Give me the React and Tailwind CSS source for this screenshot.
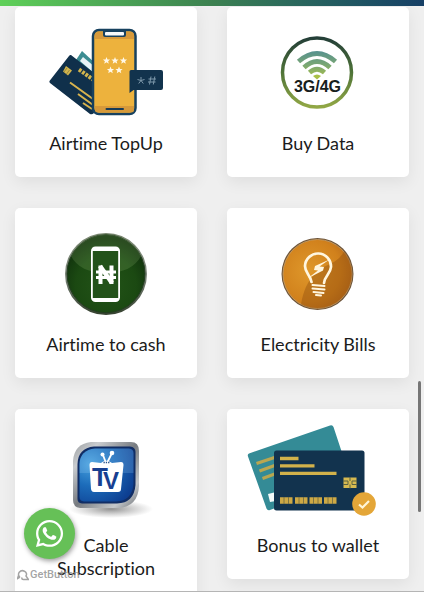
import React from "react";
import { FaWhatsapp } from "react-icons/fa";

const star = "M0 -3.6 L1 -1.1 L3.6 -1 L1.6 .7 L2.3 3.3 L0 1.8 L-2.3 3.3 L-1.6 .7 L-3.6 -1 L-1 -1.1Z";

function TopUpIcon() {
  return (
    <svg viewBox="31 23 150 109" className="h-[109px] w-[150px]" aria-hidden="true">
      <path d="M82 51 L76 60 L96 84 V64Z" fill="#3c8d92" />
      <path d="M83 57 L80 61 L95 74 V67Z" fill="#e9f3f6" />
      <path d="M71 55 Q70 54.500 69 56 L49.500 81 Q49 82 50 83 L90 114 Q92 115 94 113 V73Z" fill="#10304b" />
      <path d="M66 66 l6 4.500 l-4 5 l-5 -4z" fill="#d3b54d" />
      <path d="M67 68 l-3 4 M69.500 70 l-3 4" stroke="#7b743c" strokeWidth=".7" />
      <path d="M79 69.500 L93 79.500" stroke="#d3b54d" strokeWidth="4" strokeDasharray="2.800 1.200" />
      <path d="M70 82.500 L93 99 M78 94 L93 105 M83 103 L92 109" stroke="#d8b34e" strokeWidth="2" />
      <rect x="93" y="30" width="42.500" height="84" rx="6" fill="#edb23d" stroke="#17415f" strokeWidth="2.500" />
      <path d="M95 39 V35 Q95 32 98 32 H131 Q134 32 134 35 V39Z M95 106 H134 V110 Q134 112.500 131 112.500 H98 Q95 112.500 95 110Z" fill="#d6993a" />
      <path d="M103 30 H126 V35 Q126 37 124 37 H105 Q103 37 103 35Z" fill="#17415f" />
      <rect x="105" y="32" width="19" height="3.500" rx="1" fill="#f7fafb" />
      <path d="M106.500 109 H123" stroke="#173b56" strokeWidth="2" strokeLinecap="round" />
      <g fill="#fff8e8">
        <path d={star} transform="translate(106.500 60.500)" />
        <path d={star} transform="translate(115 60.500)" />
        <path d={star} transform="translate(123.500 60.500)" />
        <path d={star} transform="translate(110.500 70)" />
        <path d={star} transform="translate(119 70)" />
      </g>
      <path d="M131 70 H161 Q163 70 163 72 V88 Q163 90 161 90 H133.500 L129.500 93 V71.500 Q129.500 70 131 70Z" fill="#12334d" />
      <path d="M141 77 V80.500 M141 80.500 l-3.500 -1 M141 80.500 l3.500 -1 M141 80.500 l-2.300 3 M141 80.500 l2.300 3 M151 76.500 l-1.500 8 M154.800 76.500 l-1.500 8 M148.500 79 h7.500 M148 82 h7.500" fill="none" stroke="#7d98aa" strokeWidth="1" />
    </svg>
  );
}

function DataIcon() {
  return (
    <svg viewBox="243 23 150 109" className="h-[109px] w-[150px]" aria-hidden="true">
      <defs>
        <linearGradient id="ring" x1="0" y1="0" x2="0" y2="1">
          <stop offset="0" stopColor="#243f38" />
          <stop offset=".5" stopColor="#4f7438" />
          <stop offset="1" stopColor="#91a745" />
        </linearGradient>
        <linearGradient id="wifi" gradientUnits="userSpaceOnUse" x1="0" y1="51" x2="0" y2="79">
          <stop offset="0" stopColor="#56918f" />
          <stop offset=".5" stopColor="#7aa773" />
          <stop offset="1" stopColor="#a9bf45" />
        </linearGradient>
      </defs>
      <circle cx="317" cy="72.500" r="34.500" fill="#fff" stroke="url(#ring)" strokeWidth="3.500" />
      <g fill="none" stroke="url(#wifi)" strokeWidth="4.800">
        <path d="M298.500 61.500 Q317 45.500 335.500 61.500" />
        <path d="M304 67.500 Q317 55.500 330 67.500" />
        <path d="M309.500 72.500 Q317 66 324.500 72.500" />
      </g>
      <path d="M313 76 Q317 73 321 76 L317 79.500Z" fill="#a9bf45" />
      <text x="317.500" y="92" textAnchor="middle" fontFamily="Liberation Sans, sans-serif" fontWeight="700" fontSize="16" fill="#17201c">3G/4G</text>
    </svg>
  );
}

function CashIcon() {
  return (
    <svg viewBox="31 224 150 109" className="h-[109px] w-[150px]" aria-hidden="true">
      <defs>
        <radialGradient id="green" cx=".5" cy=".65" r=".6">
          <stop offset="0" stopColor="#235418" />
          <stop offset=".65" stopColor="#1b4912" />
          <stop offset="1" stopColor="#11330d" />
        </radialGradient>
        <linearGradient id="greenRim" x1="0" y1="0" x2="0" y2="1">
          <stop offset="0" stopColor="#78866f" />
          <stop offset=".5" stopColor="#7b8579" />
          <stop offset="1" stopColor="#35412f" />
        </linearGradient>
      </defs>
      <circle cx="106" cy="274" r="41" fill="url(#greenRim)" />
      <circle cx="106" cy="273.700" r="39" fill="url(#green)" stroke="#233d20" strokeWidth="1" />
      <path d="M71 256 A39 39 0 0 1 141 256 Q132 273 106 273 Q80 273 71 256Z" fill="#b5d78d" fillOpacity=".16" />
      <rect x="91" y="246.500" width="29" height="55.500" rx="4.500" fill="#fff" />
      <rect x="92.800" y="251" width="25.400" height="47" fill="#23521a" />
      <g fill="none" stroke="#fff">
        <path d="M100.500 284 V265.500 M111.500 284 V265.500" strokeWidth="4" />
        <path d="M100 266 L112 283" strokeWidth="4.500" />
        <path d="M96 272 H116 M96 277.500 H116" strokeWidth="3" />
      </g>
    </svg>
  );
}

function BulbIcon() {
  return (
    <svg viewBox="243 224 150 109" className="h-[109px] w-[150px]" aria-hidden="true">
      <defs>
        <radialGradient id="orange" cx=".38" cy=".45" r=".65">
          <stop offset="0" stopColor="#df982b" />
          <stop offset=".7" stopColor="#d1811c" />
          <stop offset="1" stopColor="#b96c1b" />
        </radialGradient>
      </defs>
      <circle cx="317.500" cy="274" r="36" fill="#6e5438" />
      <circle cx="317.500" cy="274" r="34.500" fill="url(#orange)" stroke="#c6a06a" strokeWidth=".8" />
      <path d="M344 251 A35 35 0 0 1 301 304.500 C306 276 319 269 334 262 Q341 258 344 251Z" fill="#8a4a0c" fillOpacity=".38" />
      <g fill="none" stroke="#fff6df" strokeLinecap="round">
        <path d="M311.500 282 C310 274 305 273 305 266 A13 13 0 0 1 331 267 C330.500 274 324.500 276 324 283" strokeWidth="2.700" />
        <path d="M312.500 285 l12 1 M312.500 288.500 l12 1 M313.500 292 l10 1" strokeWidth="2" />
        <path d="M316 295 l5 .4" strokeWidth="2" />
      </g>
      <path d="M329.500 259.500 L315 266 L314 270 L318 270.500 L307.500 278.500 L323 270.500 L324 267 L319.500 266.500Z" fill="#fff6df" />
    </svg>
  );
}

function TvIcon() {
  return (
    <svg viewBox="31 425 150 109" className="h-[109px] w-[150px]" aria-hidden="true">
      <defs>
        <linearGradient id="steel" x1="0" y1="0" x2="1" y2="1">
          <stop offset="0" stopColor="#9a9d9f" />
          <stop offset=".2" stopColor="#c9cccf" />
          <stop offset=".5" stopColor="#777b80" />
          <stop offset=".8" stopColor="#c5c8cb" />
          <stop offset="1" stopColor="#686c71" />
        </linearGradient>
        <radialGradient id="blue" cx=".2" cy=".3" r=".9">
          <stop offset="0" stopColor="#469fdd" />
          <stop offset=".45" stopColor="#1c6cba" />
          <stop offset="1" stopColor="#0d3e91" />
        </radialGradient>
        <radialGradient id="shade">
          <stop offset="0" stopColor="#555" stopOpacity=".65" />
          <stop offset="1" stopColor="#777" stopOpacity="0" />
        </radialGradient>
      </defs>
      <ellipse cx="111" cy="509" rx="42" ry="9" fill="url(#shade)" />
      <path d="M91 442 H131 Q139 442 139 451 V486 Q138 507 118 508 H80 Q73 507 73 500 V461 Q74 444 91 442Z" fill="url(#steel)" />
      <path d="M94 446.500 H130 Q135.500 447 135.500 452 V485 Q134 503 117 503.500 H82 Q77.500 503 77.500 499 V464 Q78 448 94 446.500Z" fill="#102d65" />
      <path d="M95 448.500 H129 Q133.500 449 133.500 453 V484 Q132 501 116 501.500 H84 Q79.500 501 79.500 497 V464 Q80 450 95 448.500Z" fill="url(#blue)" />
      <path d="M79.500 473 V464 Q80 450 95 448.500 H129 Q133.500 449 133.500 453 V473Z" fill="#a9ddff" fillOpacity=".2" />
      <path d="M106 463 L103 455 M107 463 L112 453" stroke="#fff" strokeWidth="1.800" />
      <circle cx="102.500" cy="454.500" r="2" fill="#fff" />
      <circle cx="112" cy="453" r="2.300" fill="#fff" />
      <path d="M101 463 Q106 458.500 112 463 L121 462 Q123.500 462 123.500 465 L121 489 Q121 492 118 492 H94 Q91.500 492 91 489 L89.500 465 Q89.500 462 92 462Z" fill="#fff" />
      <path d="M103.500 462.500 h6" stroke="#234f88" strokeWidth="1.300" strokeDasharray="1.300 1" />
      <g fontFamily="Liberation Sans, sans-serif" fontWeight="700" fill="#173f91">
        <text x="92" y="486" fontSize="26">T</text>
        <text x="103" y="489" fontSize="24">V</text>
      </g>
    </svg>
  );
}

function WalletIcon() {
  return (
    <svg viewBox="243 425 150 109" className="h-[109px] w-[150px]" aria-hidden="true">
      <path d="M249 453.500 L330 425.500 Q332.500 424.500 333.500 427 L351 480 L270 510 Q267.500 511 266.500 508.500 L248 456.500 Q247.200 454.200 249 453.500Z" fill="#348b96" />
      <path d="M256.500 463.500 L276 457 M259.500 471 L276 465 M262.500 478.500 L276 473.500" stroke="#b9a650" strokeWidth="3.200" />
      <path d="M268 494 L276 492 V501 L270 502Z" fill="#f4fafa" />
      <rect x="274" y="450.500" width="90.500" height="60" rx="2.500" fill="#12334e" />
      <path d="M280 458.500 H298.500 M280 465.800 H314.500 M280 473.300 H336.500" stroke="#d2b24b" strokeWidth="3.300" />
      <path d="M280 500.500 H292.500 M295 500.500 H307.500 M309.500 500.500 H322 M324 500.500 H336.500" stroke="#cda945" strokeWidth="6.500" />
      <path d="M284 497 V504 M288.500 497 V504 M299 497 V504 M303.500 497 V504 M313.500 497 V504 M318 497 V504 M328 497 V504 M332.500 497 V504" stroke="#6b6841" strokeWidth=".8" />
      <rect x="343.500" y="477.500" width="13" height="10.500" fill="#d7ba50" />
      <path d="M350 477 V481 M350 484.500 V488.500 M343 481 H348 V484.500 H343 M357 481 H352 V484.500 H357" fill="none" stroke="#5a6243" strokeWidth="1" />
      <circle cx="364" cy="504" r="11.800" fill="#e4a638" />
      <path d="M359 504.500 L362.500 507.500 L369 501" fill="none" stroke="#fff6d9" strokeWidth="2.200" />
    </svg>
  );
}

const services = [
  { name: "Airtime TopUp", Icon: TopUpIcon },
  { name: "Buy Data", Icon: DataIcon },
  { name: "Airtime to cash", Icon: CashIcon },
  { name: "Electricity Bills", Icon: BulbIcon },
  { name: "Cable Subscription", Icon: TvIcon },
  { name: "Bonus to wallet", Icon: WalletIcon },
];

export default function App() {
  return (
    <div className="relative h-screen overflow-hidden border-b border-[#b5b5b5] bg-[#efefef] font-['Lato',sans-serif]">
      <header className="relative z-10 h-[6px] bg-linear-to-r from-[#5fd058] via-[#3c8150] to-[#173f66]" />
      <main className="grid grid-cols-2 items-start gap-x-[30px] gap-y-[31px] px-[15px] pt-px">
        {services.map(({ name, Icon }) => (
          <a
            key={name}
            href="#"
            className="flex flex-col items-center rounded-[5px] bg-white px-4 pt-4 pb-[22px] shadow-[0_5px_16px_rgba(0,0,0,0.07)]"
          >
            <Icon />
            <span className="max-w-[130px] text-center text-[18px] leading-[23px] text-[#1b1b1b] [font-variant-ligatures:none]">{name}</span>
          </a>
        ))}
      </main>

      <div className="absolute bottom-[8px] left-[17px] flex flex-col items-start gap-[8px]">
        <button
          type="button"
          aria-label="Chat on WhatsApp"
          className="ml-[7px] flex size-[51px] items-center justify-center rounded-full bg-[#66c057] text-white shadow-[1px_2px_5px_rgba(0,0,0,0.4)]"
        >
          <FaWhatsapp size={31} />
        </button>
        <a href="#" className="flex items-center gap-px font-['Roboto',sans-serif] text-[11px] leading-[16px] font-medium text-[#8c8c8c]/80">
          <svg viewBox="0 0 12 12" className="size-[12px]" fill="none" stroke="currentColor" strokeWidth="1.500" aria-hidden="true">
            <path d="M3 8 A4 3.500 0 1 1 9 7 L11.500 10.500 H6.500 Q4.500 10.500 5 8.500 M3 8 L.5 9.500 L1.500 6.500" />
          </svg>
          GetButton
        </a>
      </div>

      <div className="absolute top-[381px] right-[3px] h-[131px] w-[3px] rounded-full bg-[#767676]" />
    </div>
  );
}
